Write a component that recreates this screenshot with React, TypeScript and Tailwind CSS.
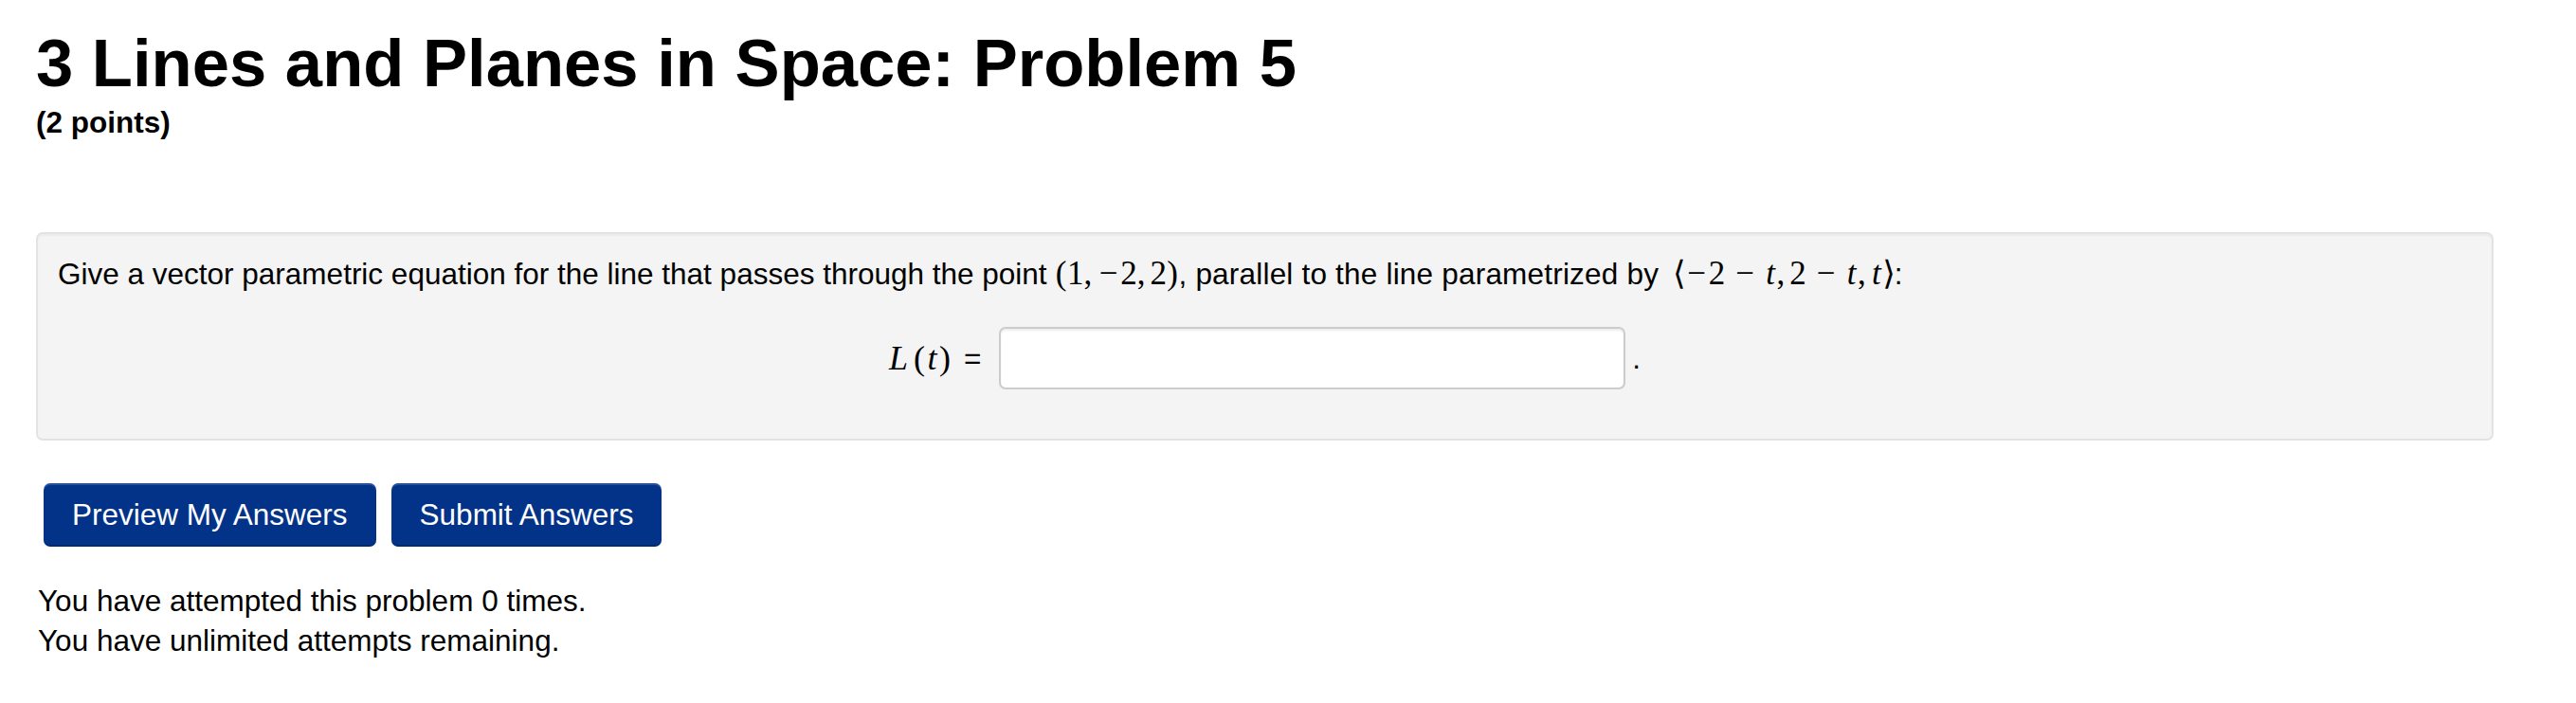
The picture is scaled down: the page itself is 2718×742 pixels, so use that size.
import React from 'react'

const serif = "font-['Liberation_Serif','DejaVu_Serif',serif]"

// TeX-like glyph boxes so the math has MathJax widths
const Minus = () => <span className="inline-block w-[0.72em] text-center">−</span>
const BinMinus = () => <span className="mx-[0.222em] inline-block w-[0.75em] text-center">−</span>
const T = () => <i className="inline-block w-[0.36em] text-center">t</i>
const Comma = () => <span className="mr-[0.12em] inline-block w-[0.27em]">,</span>
const Open = ({ c }: { c: string }) => <span className="inline-block w-[0.36em] text-center">{c}</span>

function MathPoint() {
  return (
    <span className={`${serif} text-[35px]`}>
      <Open c="(" />1<Comma />
      <Minus />2<Comma />2<Open c=")" />
    </span>
  )
}

function MathDir() {
  return (
    <span className={`${serif} ml-[6px] text-[35px]`}>
      <Open c="⟨" />
      <Minus />2<BinMinus />
      <T />
      <Comma />2<BinMinus />
      <T />
      <Comma />
      <T />
      <Open c="⟩" />
    </span>
  )
}

export default function App() {
  return (
    <div className="min-h-screen bg-white pl-[38px] pt-[32px] font-['Liberation_Sans',Arial,sans-serif] text-black">
      <h1 className="text-[70.6px] font-bold leading-[70px]">3 Lines and Planes in Space: Problem 5</h1>
      <div className="mt-[6px] text-[31.5px] font-bold leading-[42px]">(2 points)</div>

      <div className="mt-[95px] w-[2593px] rounded-[7px] border-2 border-[#e3e3e3] bg-[#f4f4f4] px-[21px] pt-[21px] pb-[52px] text-[31.5px] leading-[42px] shadow-[inset_0_2px_2px_rgba(0,0,0,0.04)]">
        <p>
          Give a vector parametric equation for the line that passes through the point <MathPoint />
          <span className="tracking-[0.2px]">, parallel to the line parametrized by</span> <MathDir />:
        </p>
        <div className="mt-[35px] flex items-center justify-center">
          <span className={`${serif} text-[36px]`}>
            <i className="inline-block w-[26px]">L</i>
            <span className="inline-block w-[12px] text-center">(</span>
            <i className="inline-block w-[15px] text-center">t</i>
            <span className="inline-block w-[12px] text-center">)</span>
          </span>
          <span className="ml-[14px]">=</span>
          <input
            type="text"
            className="ml-[19px] h-[66px] w-[661px] rounded-[7px] border-2 border-[#cccccc] bg-white shadow-[inset_0_2px_2px_rgba(0,0,0,0.075)] outline-none"
          />
          <span className="ml-[7px]">.</span>
        </div>
      </div>

      <div className="mt-[45px] ml-[8px] flex gap-[16px]">
        <button className="flex h-[67px] items-center rounded-[7px] border-b-2 border-b-[#022a70] bg-[#033388] px-[30px] text-[31.5px] leading-[42px] text-white shadow-[inset_0_2px_0_rgba(255,255,255,0.15)]">
          Preview My Answers
        </button>
        <button className="flex h-[67px] items-center rounded-[7px] border-b-2 border-b-[#022a70] bg-[#033388] px-[30px] text-[31.5px] leading-[42px] text-white shadow-[inset_0_2px_0_rgba(255,255,255,0.15)]">
          Submit Answers
        </button>
      </div>

      <div className="mt-[36px] ml-[2px] text-[31.5px] leading-[42px]">
        <p>You have attempted this problem 0 times.</p>
        <p>You have unlimited attempts remaining.</p>
      </div>
    </div>
  )
}
